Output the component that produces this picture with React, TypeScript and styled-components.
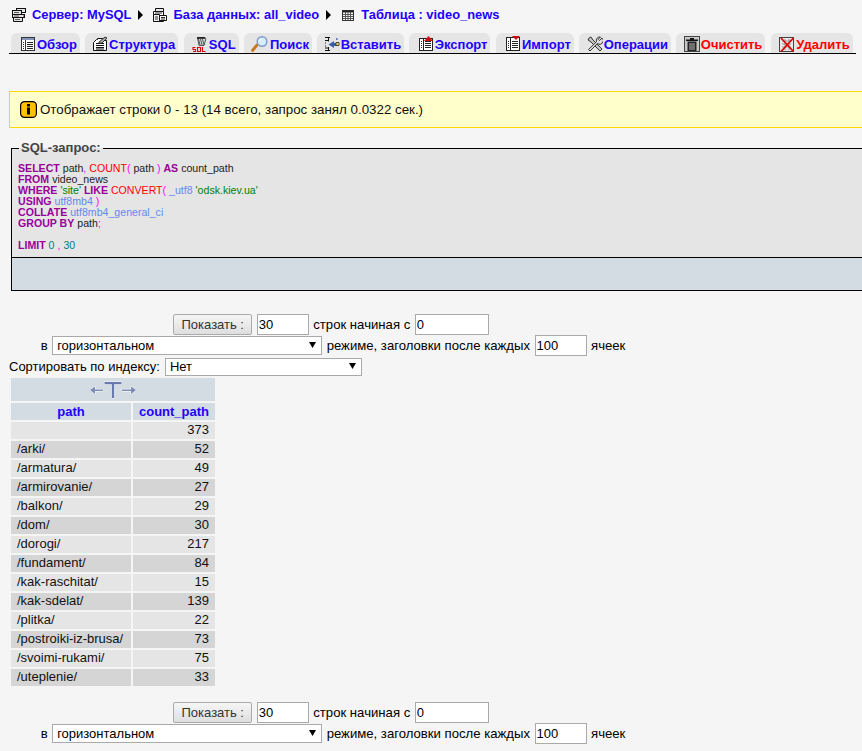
import React from "react";
import styled, { createGlobalStyle } from "styled-components";

const Global = createGlobalStyle`
  html, body { margin: 0; padding: 0; background: #f5f5f5; overflow: hidden; }
  body { font-family: "Liberation Sans", Arial, sans-serif; font-size: 13px; color: #000; }
`;

const Page = styled.div`
  width: 862px;
  height: 751px;
  overflow: hidden;
  box-sizing: border-box;
  padding-left: 9px;
`;

const Crumbs = styled.div`
  display: flex;
  align-items: center;
  height: 33px;
  padding: 0 0 4px 2px;
  box-sizing: border-box;
  gap: 5px;
  font-weight: bold;
`;
const Crumb = styled.a`
  color: #2200ff;
  font-size: 12.9px;
`;
const Sep = styled.svg`
  width: 7px;
  height: 10px;
  margin: 0 3px 0 1px;
`;

const Tabs = styled.nav`
  display: flex;
  width: 847px;
  height: 21px;
  box-sizing: border-box;
  padding-left: 2px;
  gap: 5.3px;
  border-bottom: 1px solid #000;
`;
const Tab = styled.a<{ $danger?: boolean; $w: number }>`
  display: flex;
  align-items: center;
  justify-content: flex-end;
  width: ${(p) => p.$w}px;
  box-sizing: border-box;
  padding: 2px 3px 0 0;
  gap: 1px;
  height: 20px;
  background: #e5e5e5;
  border-radius: 6px 6px 0 0;
  font-weight: bold;
  font-size: 13px;
  white-space: nowrap;
  color: ${(p) => (p.$danger ? "#ff0000" : "#2200ff")};
`;
const TabIcon = styled.svg`
  width: 16px;
  height: 16px;
  flex: none;
`;
const WideIcon = styled(TabIcon)`
  width: 18px;
`;

const Notice = styled.div`
  display: flex;
  align-items: center;
  gap: 3px;
  margin-top: 37px;
  width: 870px;
  height: 37px;
  box-sizing: border-box;
  padding-left: 10px;
  background: #ffffcc;
  border: 1px solid #ffd700;
  font-size: 13.33px;
  color: #111;
`;

const SqlBox = styled.fieldset`
  margin: 13px 0 0 2px;
  padding: 0;
  width: 870px;
  box-sizing: border-box;
  border: 1px solid #000;
  background: #e5e5e5;
  min-inline-size: auto;
`;
const SqlLegend = styled.legend`
  margin-left: 7px;
  padding: 0 2px;
  font-weight: bold;
  font-size: 13px;
  line-height: 14px;
  color: #444;
`;
const SqlCode = styled.div`
  height: 102px;
  box-sizing: border-box;
  padding: 8px 0 0 6px;
  font-size: 10.6px;
  line-height: 11px;
  color: #222;
`;
const Line = styled.div`
  min-height: 11px;
  white-space: pre;
`;
const Kw = styled.span`color: #990099; font-weight: 600;`;
const Fn = styled.span`color: #ff0000;`;
const Pn = styled.span`color: #ff00ff;`;
const Str = styled.span`color: #008000;`;
const Cs = styled.span`color: #6688ee;`;
const Num = styled.span`color: #008080;`;
const SqlFoot = styled.div`
  height: 32px;
  background: #d3dce3;
  border-top: 1px solid #000;
`;

const Form = styled.div<{ $top: number }>`
  margin-top: ${(p) => p.$top}px;
  width: 648px;
  color: #000;
  font-size: 13.15px;
`;
const Row = styled.div<{ $first?: boolean }>`
  display: flex;
  align-items: center;
  justify-content: center;
  height: 21px;
  gap: 4.5px;
  padding-right: ${(p) => (p.$first ? 4 : 0)}px;
`;
const ShowBtn = styled.button`
  width: 79px;
  height: 21px;
  padding: 0;
  box-sizing: border-box;
  font: 13px "Liberation Sans", Arial, sans-serif;
  color: #333;
  background: linear-gradient(#f6f6f6, #dedede);
  border: 1px solid #aaa;
  border-radius: 2px;
`;
const Num3 = styled.input<{ $w: number }>`
  width: ${(p) => p.$w}px;
  height: 21px;
  padding: 0 0 0 1px;
  box-sizing: border-box;
  font: 13px "Liberation Sans", Arial, sans-serif;
  color: #000;
  background: #fff;
  border: 1px solid #aaa;
  outline: none;
`;
const SelWrap = styled.span<{ $w: number; $h: number }>`
  position: relative;
  display: inline-block;
  width: ${(p) => p.$w}px;
  height: ${(p) => p.$h}px;
`;
const Sel = styled.select`
  appearance: none;
  display: block;
  width: 100%;
  height: 100%;
  box-sizing: border-box;
  padding: 0 0 0 4px;
  font: 13px "Liberation Sans", Arial, sans-serif;
  color: #000;
  background: #fff;
  border: 1px solid #aaa;
  border-radius: 0;
`;
const Arrow = styled.svg`
  position: absolute;
  right: 6px;
  top: 50%;
  margin-top: -4px;
  width: 7px;
  height: 6px;
`;
const SortRow = styled.div`
  display: flex;
  align-items: center;
  gap: 5px;
  height: 19px;
  margin-top: 1px;
`;

const Grid = styled.table`
  border-collapse: separate;
  border-spacing: 2px;
  width: 206px;
  table-layout: fixed;
`;
const HeadCell = styled.th<{ $tall?: boolean }>`
  height: ${(p) => (p.$tall ? 23 : 16)}px;
  padding: 0 0 ${(p) => (p.$tall ? 0 : 1)}px;
  background: #d3dce3;
  color: #2200ff;
  font-size: 13px;
  font-weight: bold;
  text-align: center;
  vertical-align: middle;
`;
const Cell = styled.td<{ $dark: boolean; $num?: boolean }>`
  height: 15px;
  padding: 0 6px 2px;
  background: ${(p) => (p.$dark ? "#d5d5d5" : "#e5e5e5")};
  text-align: ${(p) => (p.$num ? "right" : "left")};
  font-size: 13px;
  line-height: 14px;
  white-space: nowrap;
  color: #111;
`;
const Turn = styled.svg`
  display: block;
  margin: 0 auto;
  width: 48px;
  height: 20px;
`;

const Ic = {
  server: (
    <TabIcon viewBox="0 0 16 16">
      <g fill="#e4e4e4" stroke="#111" strokeWidth="1">
        <rect x="5.500" y="1.500" width="9" height="4" />
        <rect x="1.500" y="3.500" width="9" height="4" />
        <rect x="1.500" y="7.500" width="12" height="3" />
        <path d="M2.500 10.500h9v4h-9z" />
      </g>
      <path d="M3 5.500h5M3 9h5M4 12.500h5" stroke="#555" />
      <path d="M12 9h1" stroke="#c00000" />
    </TabIcon>
  ),
  db: (
    <TabIcon viewBox="0 0 16 16">
      <path d="M3.500 1.500h8v3h-8z" fill="#e8e8e8" stroke="#111" />
      <path d="M1.500 4.500h10v10h-10z" fill="#fff" stroke="#111" />
      <path d="M1.500 7.500h6v7h-6z" fill="#eee" stroke="#111" />
      <path d="M7.500 8.500h7v5h-7z" fill="#fff" stroke="#111" />
      <path d="M3 6h7M3 10h3M3 12h3M9 10.500h4M9 12h4" stroke="#333" />
    </TabIcon>
  ),
  table: (
    <TabIcon viewBox="0 0 16 16">
      <rect x="2.500" y="3.500" width="11" height="10" fill="#fff" stroke="#333" />
      <path d="M2.500 4.500h11" stroke="#222" strokeWidth="2" />
      <path d="M5.500 5v8M8 5v8M10.500 5v8M3 7.500h10M3 9.500h10M3 11.500h10" stroke="#555" />
    </TabIcon>
  ),
  browse: (
    <TabIcon viewBox="0 0 16 16">
      <rect x="1.500" y="1.500" width="13" height="13" fill="#fff" stroke="#333" />
      <path d="M2 3h12" stroke="#8594bd" strokeWidth="2" />
      <path d="M5.500 4v10" stroke="#333" />
      <path d="M3 6.500h1M3 8.500h1M3 10.500h1M3 12.500h1M7 6.500h6M7 8.500h6M7 10.500h6M7 12.500h6" stroke="#222" />
    </TabIcon>
  ),
  structure: (
    <TabIcon viewBox="0 0 16 16">
      <path d="M1.500 6.500l3-3h1v-1h5v2h4v10h-13z" fill="#fff" stroke="#111" />
      <path d="M4 7.500h8M4 9.500h8M4 11.500h8M4 13h8" stroke="#111" />
      <path d="M7 6l6-5 2 1-5 5-3 .5z" fill="#aaa" stroke="#222" strokeWidth=".9" />
    </TabIcon>
  ),
  sql: (
    <TabIcon viewBox="0 0 16 16">
      <path d="M5.500 1.500h7l1.500 1-2 7h-5z" fill="#ddd" stroke="#555" />
      <path d="M5 2h8" stroke="#111" strokeWidth="1.500" />
      <path d="M6.500 3l1.500 6M8.500 3l1.500 6M10.500 3l1.500 6" stroke="#555" />
      <path d="M1 15.500h2.500v-2H1v-2h2.500M5.500 11.500h3v4h-3zM8 15.500l1 .5M10.500 11v4.500h3" fill="none" stroke="#dd0000" strokeWidth="1.100" />
    </TabIcon>
  ),
  search: (
    <WideIcon viewBox="0 0 18 16">
      <path d="M6 9l-4.500 5.500" stroke="#c87818" strokeWidth="2.800" strokeLinecap="round" />
      <circle cx="11" cy="5.500" r="4.800" fill="#d8ecff" stroke="#7a9cc6" strokeWidth="1.400" />
      <path d="M8.500 5a3 3 0 0 1 2-2" stroke="#fff" fill="none" />
    </WideIcon>
  ),
  insert: (
    <TabIcon viewBox="0 0 16 16">
      <path d="M1 1.500h5M1 14.500h5M4.500 1.500v4M4.500 11v3.500" stroke="#111" fill="none" />
      <path d="M1 4.500h3M1 7h1M1 10h1M1 12h3" stroke="#111" />
      <path d="M10 5v2h2v3h-2v2L4.500 8.500z" fill="#3a5ea8" />
      <path d="M12 6.500h3v3h-3z" fill="#f5d76e" stroke="#222" strokeWidth=".8" />
      <path d="M12 3h1M13 2v2" stroke="#3a5ea8" />
    </TabIcon>
  ),
  exp: (
    <TabIcon viewBox="0 0 16 16">
      <rect x="1.500" y="2.500" width="13" height="12" fill="#fff" stroke="#222" />
      <path d="M5.500 3v11M3 5.500h1M3 7.500h1M3 9.500h1M3 11.500h1M7 5.500h6M7 7.500h6M7 9.500h6M7 11.500h6" stroke="#222" />
      <path d="M6 5l4.500-5L15 5z" fill="#d01010" />
    </TabIcon>
  ),
  imp: (
    <TabIcon viewBox="0 0 16 16">
      <rect x="1.500" y="1.500" width="13" height="13" fill="#fff" stroke="#222" />
      <path d="M5.500 2v12M3 5.500h1M3 7.500h1M3 9.500h1M3 11.500h1M7 5.500h6M7 7.500h6M7 9.500h6M7 11.500h6" stroke="#222" />
      <path d="M7 0h8l-4 4z" fill="#d01010" />
    </TabIcon>
  ),
  ops: (
    <TabIcon viewBox="0 0 16 16">
      <path d="M2 2l2-1 2 3 9 9-2 2-9-9-3-2z" fill="#c4c4c4" stroke="#222" strokeWidth=".9" />
      <path d="M15 2l-2.500 2.500-1.200-1.200L13.500 1a3.500 3.500 0 0 0-4 4.700L1.500 13.500 3 15l7.500-7.500A3.500 3.500 0 0 0 15 2z" fill="#ddd" stroke="#222" strokeWidth=".9" />
    </TabIcon>
  ),
  empty: (
    <TabIcon viewBox="0 0 16 16">
      <rect x=".5" y=".5" width="15" height="15" fill="#c8c8c8" stroke="#444" />
      <path d="M2 3.500h12V5H2zM6 2h4v1.500H6z" fill="#111" />
      <path d="M3.500 5.500h9V15h-9z" fill="#222" />
      <path d="M6 7v7M8 7v7M10 7v7" stroke="#bbb" />
    </TabIcon>
  ),
  drop: (
    <TabIcon viewBox="0 0 16 16">
      <rect x=".5" y="1.500" width="14" height="14" fill="#e8e8e8" stroke="#444" />
      <path d="M3 5h9M3 8h9M3 11h9M6 3v11M10 3v11" stroke="#999" />
      <path d="M2 2l12.500 13.500M14.500 2L2 15.500" stroke="#e00000" strokeWidth="1.700" />
    </TabIcon>
  ),
};

const tabs: { label: string; icon: React.ReactNode; w: number; danger?: boolean }[] = [
  { label: "Обзор", icon: Ic.browse, w: 69 },
  { label: "Структура", icon: Ic.structure, w: 93 },
  { label: "SQL", icon: Ic.sql, w: 55 },
  { label: "Поиск", icon: Ic.search, w: 68 },
  { label: "Вставить", icon: Ic.insert, w: 87 },
  { label: "Экспорт", icon: Ic.exp, w: 81 },
  { label: "Импорт", icon: Ic.imp, w: 78 },
  { label: "Операции", icon: Ic.ops, w: 92 },
  { label: "Очистить", icon: Ic.empty, w: 89, danger: true },
  { label: "Удалить", icon: Ic.drop, w: 82, danger: true },
];

const rows: [string, number][] = [
  ["", 373],
  ["/arki/", 52],
  ["/armatura/", 49],
  ["/armirovanie/", 27],
  ["/balkon/", 29],
  ["/dom/", 30],
  ["/dorogi/", 217],
  ["/fundament/", 84],
  ["/kak-raschitat/", 15],
  ["/kak-sdelat/", 139],
  ["/plitka/", 22],
  ["/postroiki-iz-brusa/", 73],
  ["/svoimi-rukami/", 75],
  ["/uteplenie/", 33],
];

const Triangle = () => (
  <Arrow viewBox="0 0 7 6">
    <path d="M0 0h7L3.500 6z" fill="#000" />
  </Arrow>
);

const Controls = ({ top }: { top: number }) => (
  <Form $top={top}>
    <Row $first>
      <ShowBtn type="button">Показать :</ShowBtn>
      <Num3 $w={52} defaultValue="30" />
      <span>строк начиная с</span>
      <Num3 $w={74} defaultValue="0" />
    </Row>
    <Row>
      <span>в</span>
      <SelWrap $w={270} $h={19}>
        <Sel defaultValue="h">
          <option value="h">горизонтальном</option>
        </Sel>
        <Triangle />
      </SelWrap>
      <span>режиме, заголовки после каждых</span>
      <Num3 $w={52} defaultValue="100" />
      <span>ячеек</span>
    </Row>
  </Form>
);

export default function App() {
  return (
    <Page>
      <Global />
      <Crumbs>
        {Ic.server}
        <Crumb>Сервер: MySQL</Crumb>
        <Sep viewBox="0 0 7 10"><path d="M1 0l5 5-5 5z" fill="#000" /></Sep>
        {Ic.db}
        <Crumb>База данных: all_video</Crumb>
        <Sep viewBox="0 0 7 10"><path d="M1 0l5 5-5 5z" fill="#000" /></Sep>
        {Ic.table}
        <Crumb>Таблица : video_news</Crumb>
      </Crumbs>
      <Tabs>
        {tabs.map((t) => (
          <Tab key={t.label} $w={t.w} $danger={t.danger}>
            {t.icon}
            {t.label}
          </Tab>
        ))}
      </Tabs>
      <Notice>
        <svg width="17" height="17" viewBox="0 0 17 17">
          <rect x=".6" y=".6" width="15.800" height="15.800" rx="4" fill="#ffc000" stroke="#000" strokeWidth="1.200" />
          <rect x="7" y="3" width="3" height="2.500" fill="#000" />
          <rect x="7" y="6.500" width="3" height="7" fill="#000" />
        </svg>
        Отображает строки 0 - 13 (14 всего, запрос занял 0.0322 сек.)
      </Notice>
      <SqlBox>
        <SqlLegend>SQL-запрос:</SqlLegend>
        <SqlCode>
          <Line><Kw>SELECT</Kw> path<Pn>,</Pn> <Fn>COUNT</Fn><Pn>(</Pn> path <Pn>)</Pn> <Kw>AS</Kw> count_path</Line>
          <Line><Kw>FROM</Kw> video_news</Line>
          <Line><Kw>WHERE</Kw> <Str>'site'</Str> <Kw>LIKE</Kw> <Fn>CONVERT</Fn><Pn>(</Pn> <Cs>_utf8</Cs> <Str>'odsk.kiev.ua'</Str></Line>
          <Line><Kw>USING</Kw> <Cs>utf8mb4</Cs> <Pn>)</Pn></Line>
          <Line><Kw>COLLATE</Kw> <Cs>utf8mb4_general_ci</Cs></Line>
          <Line><Kw>GROUP BY</Kw> path<Pn>;</Pn></Line>
          <Line> </Line>
          <Line><Kw>LIMIT</Kw> <Num>0</Num> <Pn>,</Pn> <Num>30</Num></Line>
        </SqlCode>
        <SqlFoot />
      </SqlBox>
      <Controls top={23} />
      <SortRow>
        <span>Сортировать по индексу:</span>
        <SelWrap $w={197} $h={18}>
          <Sel defaultValue="n">
            <option value="n">Нет</option>
          </Sel>
          <Triangle />
        </SelWrap>
      </SortRow>
      <Grid>
        <colgroup>
          <col style={{ width: 120 }} />
          <col style={{ width: 82 }} />
        </colgroup>
        <thead>
          <tr>
            <HeadCell colSpan={2} $tall>
              <Turn viewBox="0 0 48 20">
                <g stroke="#fff" strokeWidth="1" paintOrder="stroke">
                  <path d="M1 10l5-3.500v3h8v1.500H6v3zM47 10l-5-3.500v3h-9v1.500h9v3z" fill="#7d8cb5" />
                  <path d="M15.500 2h17v2.200h-7.300V18h-2.400V4.200h-7.300z" fill="#6a79ad" />
                </g>
              </Turn>
            </HeadCell>
          </tr>
          <tr>
            <HeadCell>path</HeadCell>
            <HeadCell>count_path</HeadCell>
          </tr>
        </thead>
        <tbody>
          {rows.map(([p, n], i) => (
            <tr key={i}>
              <Cell $dark={i % 2 === 1}>{p}</Cell>
              <Cell $dark={i % 2 === 1} $num>{n}</Cell>
            </tr>
          ))}
        </tbody>
      </Grid>
      <Controls top={14} />
    </Page>
  );
}
